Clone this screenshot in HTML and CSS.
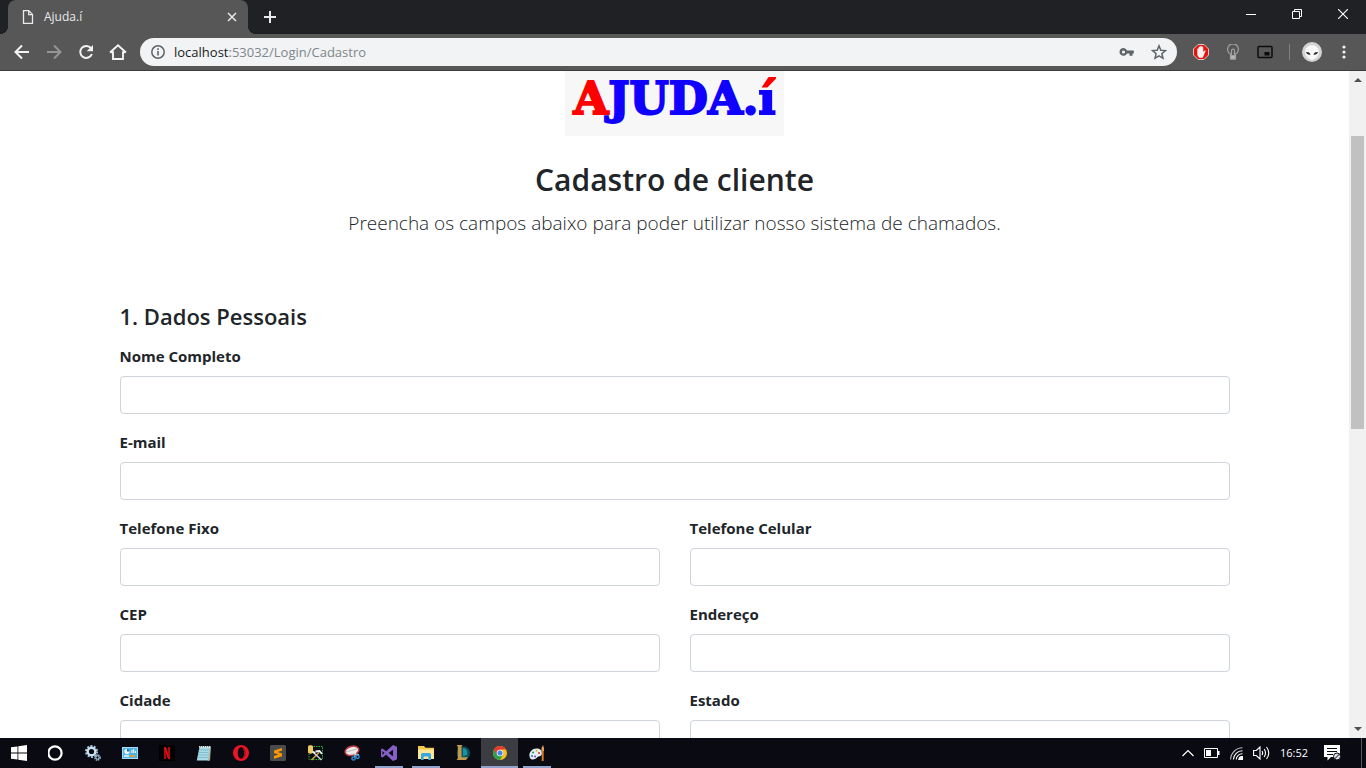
FILE: index.html
```html
<!DOCTYPE html>
<html lang="pt-BR">
<head>
<meta charset="utf-8">
<meta name="viewport" content="width=device-width, initial-scale=1">
<title>Ajuda.í</title>
<link rel="stylesheet" href="styles.css">
</head>
<body>
<header class="browser">
  <div class="tabstrip">
    <div class="tab">
      <svg class="tab-icon" width="12" height="16" viewBox="0 0 12 16" fill="none" stroke="#e8eaed" stroke-width="1.3"><path d="M1.5 1.6h5.3l3.7 3.8v9h-9zM6.7 1.6v4h3.8"/></svg>
      <span class="tab-title">Ajuda.í</span>
      <button class="plain" aria-label="Fechar guia"><svg width="10" height="10" viewBox="0 0 10 10" stroke="#e8eaed" stroke-width="1.5"><path d="M1 1l8 8M9 1l-8 8"/></svg></button>
    </div>
    <button class="plain new-tab" aria-label="Nova guia"><svg width="12" height="12" viewBox="0 0 12 12" stroke="#e8eaed" stroke-width="2"><path d="M6 0v12M0 6h12"/></svg></button>
    <div class="window-buttons">
      <button class="plain" aria-label="Minimizar"><svg width="10" height="10" viewBox="0 0 10 10" stroke="#fff"><path d="M0 5.5h10"/></svg></button>
      <button class="plain" aria-label="Restaurar"><svg width="10" height="10" viewBox="0 0 10 10" stroke="#fff" fill="none"><path d="M.5 2.5h7v7h-7zM2.5 2.5v-2h7v7h-2"/></svg></button>
      <button class="plain" aria-label="Fechar"><svg width="10" height="10" viewBox="0 0 10 10" stroke="#fff" stroke-width="1.1"><path d="M0 0l10 10M10 0L0 10"/></svg></button>
    </div>
  </div>
  <div class="toolbar">
    <div class="nav">
      <button class="plain" aria-label="Voltar"><svg width="16" height="16" viewBox="0 0 16 16" fill="none" stroke="#f1f3f4" stroke-width="2"><path d="M15 8H2M8 1.5L1.5 8 8 14.5"/></svg></button>
      <button class="plain" aria-label="Avançar"><svg width="16" height="16" viewBox="0 0 16 16" fill="none" stroke="#959595" stroke-width="2"><path d="M1 8h13M8 1.5L14.5 8 8 14.5"/></svg></button>
      <button class="plain" aria-label="Recarregar"><svg width="16" height="16" viewBox="0 0 16 16"><path d="M13 4.2A6 6 0 1 0 13.9 10" fill="none" stroke="#f1f3f4" stroke-width="2"/><path d="M15 1v6.3H8.7z" fill="#f1f3f4"/></svg></button>
      <button class="plain" aria-label="Página inicial"><svg width="18" height="16" viewBox="0 0 18 16" fill="none" stroke="#f1f3f4" stroke-width="1.9"><path d="M1 8.5L9 1.3l8 7.2M1.5 8.2H4V15h10V8.200h2.500"/></svg></button>
    </div>
    <div class="address">
      <svg width="14" height="14" viewBox="0 0 14 14" fill="none" stroke="#5f6368" stroke-width="1.5"><circle cx="7" cy="7" r="6.2"/><path d="M7 6v4.500M7 3.300v1.600" stroke-width="1.600"/></svg>
      <span class="url"><b>localhost</b>:53032/Login/Cadastro</span>
      <button class="plain" aria-label="Senhas"><svg width="16" height="10" viewBox="0 0 16 10"><path d="M8 3.400h6.800v3h-1.300v2.400h-3V6.400H8A3.900 3.900 0 1 1 8 3.400zM4.500 3.400a1.600 1.600 0 1 0 0 3.200 1.600 1.600 0 0 0 0-3.200z" fill="#5f6368" fill-rule="evenodd"/></svg></button>
      <button class="plain" aria-label="Favoritos"><svg width="16" height="16" viewBox="0 0 16 16" fill="none" stroke="#5f6368" stroke-width="1.500"><path d="M8 1.800l1.800 4.400 4.700.4-3.600 3.100 1.100 4.600L8 11.900l-4 2.400 1.100-4.600-3.600-3.100 4.700-.4z"/></svg></button>
    </div>
    <div class="extensions">
      <button class="plain" aria-label="Bloqueador"><svg width="16" height="16" viewBox="0 0 16 16"><path d="M5 .5h6L15.500 5v6L11 15.500H5L.5 11V5z" fill="#e9120b" stroke="#d7c6c6"/><path d="M4.300 8V5c0-1 1.400-1 1.400 0V3.300c0-1 1.500-1 1.500 0v-.7c0-1 1.500-1 1.500 0v.7c0-1 1.500-1 1.500 0V8l1-1.300c.9-.7 1.700 0 1.200.8L10.700 11.500 9.800 13.800H6L4.300 11z" fill="#f5f1f1"/></svg></button>
      <button class="plain" aria-label="Lâmpada"><svg width="14" height="16" viewBox="0 0 14 16" fill="none" stroke="#a0a0a0" stroke-width="1.200"><path d="M4.500 11.500V10A5.400 5.400 0 1 1 9.500 10v1.500M5.500 11V6.200c0-1.500 3-1.500 3 0V11"/><path d="M4.500 11.500h5v3.600h-5z" fill="#b8b8b8"/></svg></button>
      <button class="plain" aria-label="Picture in picture"><svg width="16" height="14" viewBox="0 0 16 14"><rect x="1" y="1.500" width="14" height="11" rx="1" fill="none" stroke="#0c0c0c" stroke-width="1.500"/><path d="M7.500 7h5v3.500h-5z" fill="#0c0c0c"/></svg></button>
    </div>
    <span class="divider"></span>
    <button class="plain avatar" aria-label="Perfil"><svg width="20" height="20" viewBox="0 0 20 20"><circle cx="10" cy="10" r="10" fill="#d3d3d3"/><path d="M3 10C3 1 17 1 17 10c0 4-4 7.500-7 8-3-.5-7-4-7-8z" fill="#f8f8f8"/><path d="M4 10c2.500 0 4 .8 4.600 2.600-2.600.2-4.100-.6-4.600-2.600zM16 10c-2.500 0-4 .8-4.600 2.600 2.600.2 4.100-.6 4.600-2.600z" fill="#222"/></svg></button>
    <button class="plain menu" aria-label="Menu"><svg width="4" height="14" viewBox="0 0 4 14" fill="#f1f3f4"><circle cx="2" cy="2" r="1.600"/><circle cx="2" cy="7" r="1.600"/><circle cx="2" cy="12" r="1.600"/></svg></button>
  </div>
</header>

<div class="viewport">
  <main class="page">
    <div class="container">
      <div class="intro">
        <div class="logo"><span class="logo-a">A</span>JUDA.<span class="logo-i">í</span></div>
        <h2>Cadastro de cliente</h2>
        <p class="lead">Preencha os campos abaixo para poder utilizar nosso sistema de chamados.</p>
      </div>
      <form>
        <h4>1. Dados Pessoais</h4>
        <div class="fields">
          <div class="field wide"><label for="nome">Nome Completo</label><input id="nome" type="text"></div>
          <div class="field wide"><label for="email">E-mail</label><input id="email" type="email"></div>
          <div class="field"><label for="fixo">Telefone Fixo</label><input id="fixo" type="tel"></div>
          <div class="field"><label for="celular">Telefone Celular</label><input id="celular" type="tel"></div>
          <div class="field"><label for="cep">CEP</label><input id="cep" type="text"></div>
          <div class="field"><label for="endereco">Endereço</label><input id="endereco" type="text"></div>
          <div class="field"><label for="cidade">Cidade</label><input id="cidade" type="text"></div>
          <div class="field"><label for="estado">Estado</label><input id="estado" type="text"></div>
        </div>
      </form>
    </div>
  </main>
  <div class="scrollbar">
    <svg width="8" height="4" viewBox="0 0 8 4"><path d="M0 4l4-4 4 4z" fill="#505050"/></svg>
    <div class="track"><div class="thumb"></div></div>
    <svg width="8" height="4" viewBox="0 0 8 4"><path d="M0 0l4 4 4-4z" fill="#505050"/></svg>
  </div>
</div>

<footer class="taskbar">
  <div class="apps">
    <button class="app" aria-label="Iniciar"><svg width="16" height="16" viewBox="0 0 16 16" fill="#fff"><path d="M0 2.300l6.500-.9v6.200H0zM7.300 1.300L16 0v7.600H7.300zM0 8.400h6.500v6.200L0 13.700zM7.300 8.400H16V16l-8.700-1.300z"/></svg></button>
    <button class="app" aria-label="Cortana"><svg width="16" height="16" viewBox="0 0 16 16"><circle cx="7" cy="8" r="6.600" fill="none" stroke="#fff" stroke-width="2.200"/></svg></button>
    <button class="app" aria-label="Serviços"><svg width="16" height="16" viewBox="0 0 16 16" fill="none"><circle cx="6.500" cy="6.500" r="5.500" stroke="#9fc0d4" stroke-width="2" stroke-dasharray="2 1.450"/><circle cx="6.500" cy="6.500" r="3.800" stroke="#c9e0ed" stroke-width="2.400"/><circle cx="12.500" cy="12.500" r="2.600" stroke="#87a9c2" stroke-width="1.600" stroke-dasharray="1.500 .6"/><circle cx="12.500" cy="12.500" r="1.600" stroke="#b9d3e4"/></svg></button>
    <button class="app" aria-label="Painel de Controle"><svg width="16" height="14" viewBox="0 0 16 14"><rect x=".5" y="1.500" width="15" height="11" fill="#4cb3e8" stroke="#a7dcf5"/><circle cx="5" cy="5.500" r="2.700" fill="#e9f5fb"/><path d="M5 5.500V2.800A2.700 2.700 0 0 1 7.700 5.500z" fill="#1d6fae"/><path d="M9.500 4h1v3h-1zM11.200 3h1v4h-1zM13 5h1v2h-1z" fill="#fff"/><path d="M2 10h5" stroke="#fff" stroke-width="1.400"/><path d="M8 10h5" stroke="#f0a020" stroke-width="1.800"/></svg></button>
    <button class="app" aria-label="Netflix"><svg width="16" height="16" viewBox="0 0 16 16"><path d="M0 0h16v16H0z" fill="#000"/><path d="M5 2h2v12l-2 .3zM9 2h2v12.300L9 14z" fill="#b20710"/><path d="M5 2h2l4 12.300L9 14z" fill="#e50914"/></svg></button>
    <button class="app" aria-label="Bloco de Notas"><svg width="16" height="16" viewBox="0 0 16 16"><path d="M4 1.500h11L14 15.500 12 16z" fill="#b5ae98"/><path d="M3.500 2H14l-2 13.500H.8z" fill="#a8dbe6"/><path d="M3 5h10M2.500 7.500h10M2 10h10.500M1.500 12.500h10.500" stroke="#6fb2c4" stroke-width=".7"/><path d="M3 1.700h12" stroke="#e5ebeb" stroke-width="1.600" stroke-dasharray="1.200 .8"/></svg></button>
    <button class="app" aria-label="Opera"><svg width="16" height="16" viewBox="0 0 16 16"><path fill-rule="evenodd" d="M8 0a8 8 0 1 0 0 16A8 8 0 0 0 8 0zm0 2.300c2 0 3.200 2.600 3.200 5.700S10 13.700 8 13.700 4.800 11.100 4.800 8 6 2.300 8 2.300z" fill="#e91525"/><path d="M8 2.300C14 0 15 15.500 8 13.700c2 0 3.200-2.600 3.200-5.700S10 2.300 8 2.300z" fill="#b30d1a"/></svg></button>
    <button class="app" aria-label="Sublime Text"><svg width="16" height="16" viewBox="0 0 16 16"><rect width="16" height="16" rx="1.500" fill="#4b4b4b"/><path d="M12 3v2.600L7.500 7 12 8.600v2.600L4 13.700v-2.600l4.500-1.500L4 8V5.500z" fill="#ff9800"/></svg></button>
    <button class="app" aria-label="Configuração"><svg width="16" height="16" viewBox="0 0 16 16"><path d="M4 1.500h11.500v13H2V9" fill="none" stroke="#22b52a" stroke-dasharray="1.500 1"/><path d="M1 1.500C1-.2 6 0 6 1.500v6C6 9 1 9 1 7.500z" fill="#efca63"/><path d="M4.500 15L12 7.500" stroke="#c99b39" stroke-width="1.700"/><path d="M7 8l7.500 7" stroke="#c8d2dc" stroke-width="1.600"/><path d="M8.500 6.500l4-.5 2.500 3M6 6.500l2 2" stroke="#edf2f4" stroke-width="1.800" fill="none"/></svg></button>
    <button class="app" aria-label="Ferramenta de Captura"><svg width="16" height="16" viewBox="0 0 16 16"><ellipse cx="8" cy="5.800" rx="7" ry="4.500" transform="rotate(-15 8 6)" fill="#f0e9ea" stroke="#bd3943" stroke-width="1.500"/><path d="M2 7l11-3" stroke="#bbb"/><path d="M7 8.500l8 1M11.500 8l-.7 4" stroke="#d3dce3" stroke-width="1.200"/><g fill="none" stroke="#2a8cd0" stroke-width="1.500"><circle cx="9.500" cy="13.500" r="1.600"/><circle cx="13.500" cy="11.800" r="1.600"/></g></svg></button>
    <button class="app open" aria-label="Visual Studio"><svg width="16" height="16" viewBox="0 0 16 16"><path fill-rule="evenodd" d="M12 0l4 1.700v12.600L12 16 5.200 9.700 1.500 12.500 0 11.700V4.300l1.500-.8 3.700 2.800zM12 4.700L7.500 8l4.500 3.300zM1.500 6v4l2-2z" fill="#865fc5"/></svg></button>
    <button class="app open" aria-label="Explorador de Arquivos"><svg width="16" height="14" viewBox="0 0 16 14"><path d="M0 0h6l1.500 1.700H16V13H0z" fill="#f2c94c"/><path d="M0 3.500h16V13H0z" fill="#ffe694"/><path d="M3 14V8.500Q3 7 4.500 7h7Q13 7 13 8.500V14h-2.700v-3.500H5.700V14z" fill="#38a7e4"/></svg></button>
    <button class="app" aria-label="League of Legends"><svg width="16" height="16" viewBox="0 0 16 16"><circle cx="8.500" cy="8" r="6" fill="#0d5762" stroke="#104451" stroke-width="1.500"/><path d="M8 3c3 0 5 3 4 7L8 11z" fill="#1b929b"/><path d="M1.500 0h6L6.500 1.500v10.700H13L11 15H1.500l1.300-1.800V1.600z" fill="#c19a4e"/></svg></button>
    <button class="app active open" aria-label="Google Chrome"><svg width="16" height="16" viewBox="0 0 16 16"><circle cx="8" cy="8" r="7" fill="#fbc116"/><path d="M1.940 4.500A7 7 0 0 0 8 15l3-5.200L8 8z" fill="#2ba24c"/><path d="M1.940 4.500L5 9.700 8 4.500h6.060A7 7 0 0 0 1.940 4.500z" fill="#e33b2e"/><circle cx="8" cy="8" r="3.300" fill="#f4f4f4"/><circle cx="8" cy="8" r="2.500" fill="#4285f4"/></svg></button>
    <button class="app open" aria-label="Paint"><svg width="16" height="16" viewBox="0 0 16 16"><path d="M1 13C-1 9 2 3.500 7.500 3.500 12 3.500 14 7 12.500 10c-.7 1.700-3 .7-4 2C7 14 3 16 1 13z" fill="#e3edf5"/><circle cx="4" cy="7.500" r="1.100" fill="#36a143"/><circle cx="7.500" cy="5.700" r="1" fill="#e6b31a"/><circle cx="3" cy="11" r="1.100" fill="#3678c8"/><circle cx="10" cy="8" r="1.100" fill="#d33c32"/><circle cx="6" cy="11.500" r="1.100" fill="#8a4cad"/><path d="M13.700 16V6" stroke="#d77620" stroke-width="2"/><path d="M12.500 6V3L14 0l1 3v3z" fill="#e0a05a"/></svg></button>
  </div>
  <div class="tray">
    <button class="plain" aria-label="Ícones ocultos"><svg width="12" height="8" viewBox="0 0 12 8" fill="none" stroke="#fff" stroke-width="1.200"><path d="M.5 7L6 1.500 11.500 7"/></svg></button>
    <svg width="16" height="10" viewBox="0 0 16 10"><path d="M.5.500h13v9H.5z" fill="none" stroke="#fff"/><path d="M2 2h5v6H2zM14 3h1.500v4H14z" fill="#fff"/></svg>
    <svg width="13" height="13" viewBox="0 0 13 13" fill="none" stroke="#fff" stroke-width="1.100"><path d="M.6 12.500A12 12 0 0 1 12.500.8" stroke="#bbb"/><path d="M3.400 12.500a9 9 0 0 1 9.100-8.700M6.200 12.500a6 6 0 0 1 6.300-5.700"/><path d="M8.800 12.500a3.500 3.500 0 0 1 3.700-3v3z" fill="#fff"/></svg>
    <svg width="17" height="14" viewBox="0 0 17 14" fill="none" stroke="#fff" stroke-width="1.100"><path d="M.6 4.500h2.700L7 1v12L3.300 9.500H.6zM9 5q1.300 2 0 4M11.200 3q2.600 4 0 8M13.500 1q4.500 6 0 12"/></svg>
    <time class="clock">16:52</time>
    <button class="plain notes" aria-label="Notificações"><svg width="17" height="16" viewBox="0 0 17 16"><path d="M0 0h16v12H7l-3.500 3.500V12H0z" fill="#fff"/><path d="M3 3.500h10M3 6.500h10M3 9.500h6" stroke="#0a0b12"/><circle cx="13" cy="11.500" r="3.500" fill="#ddd" stroke="#0a0b12"/><path d="M10.500 14L15.500 9" stroke="#0a0b12"/></svg></button>
  </div>
</footer>
</body>
</html>
```
FILE: styles.css
```css
* { box-sizing: border-box; }

body {
  margin: 0;
  height: 100vh;
  display: flex;
  flex-direction: column;
  overflow: hidden;
  background: #fff;
  color: #212529;
  font: 16px/24px "Open Sans", "Noto Sans", sans-serif;
}

svg { display: block; flex: none; }

.plain {
  display: flex;
  align-items: center;
  justify-content: center;
  padding: 0;
  border: 0;
  background: none;
}

/* Browser window */
.browser { background: #575757; border-bottom: 1px solid #3c3c3c; }

.tabstrip { display: flex; height: 34px; background: #202124; padding-left: 8px; }

.tab {
  display: flex;
  align-items: center;
  width: 240px;
  padding: 0 11px 0 14px;
  background: #575757;
  border-radius: 8px 8px 0 0;
  position: relative;
}

.tab::before,
.tab::after {
  content: "";
  position: absolute;
  bottom: 0;
  width: 8px;
  height: 8px;
}
.tab::before { left: -8px; background: radial-gradient(circle at 0 0, #202124 8px, #575757 8px); }
.tab::after { right: -8px; background: radial-gradient(circle at 100% 0, #202124 8px, #575757 8px); }

.tab-title { flex: 1; margin-left: 10px; color: #e8eaed; font-size: 12px; }
.new-tab { width: 44px; }
.window-buttons { display: flex; margin-left: auto; padding-bottom: 6px; }
.window-buttons .plain { width: 46px; }

.toolbar { display: flex; align-items: center; height: 36px; }
.nav { display: flex; padding-left: 6px; }
.nav .plain { width: 32px; height: 28px; }

.address {
  flex: 1;
  display: flex;
  align-items: center;
  height: 28px;
  margin-left: 6px;
  padding: 0 10px 0 11px;
  border-radius: 14px;
  background: #f1f3f4;
}
.url { flex: 1; margin-left: 9px; color: #80868b; font-size: 13px; line-height: 20px; }
.url b { color: #202124; font-weight: 400; }
.address .plain { margin-left: 16px; }

.extensions { display: flex; margin-left: 8px; }
.extensions .plain { width: 32px; height: 28px; }
.divider { width: 1px; height: 16px; margin-left: 8px; background: #808080; }
.avatar { margin-left: 12px; }
.menu { margin: 0 20px; }

/* Page area */
.viewport { flex: 1; min-height: 0; display: flex; }
.page { flex: 1; overflow: hidden; }
.container { max-width: 1140px; margin: 0 auto; padding: 0 15px; }

.intro { display: flex; flex-direction: column; align-items: center; text-align: center; }

.logo {
  padding: 0 8px 10px;
  background: #f7f7f7;
  color: #1000ff;
  font: bold 45px/55px "DejaVu Serif", serif;
  -webkit-text-stroke: 2px currentColor;
}
.logo-a { color: #f00; }
.logo-i {
  background: linear-gradient(#f00 17px, #1000ff 17px);
  -webkit-background-clip: text;
  background-clip: text;
  color: transparent;
}

h2 { margin: 24px 0 8px; font-size: 30px; line-height: 40px; font-weight: 600; }
.lead { margin: 0; font-size: 19px; line-height: 30px; font-weight: 300; }

form { padding-top: 64px; }
h4 { margin: 0 0 14px; font-size: 22px; line-height: 28px; font-weight: 600; }

.fields { display: grid; grid-template-columns: 1fr 1fr; gap: 16px 30px; }
.wide { grid-column: 1 / -1; }
.field label { display: block; margin-bottom: 8px; font-size: 15px; font-weight: 700; }
.field input {
  display: block;
  width: 100%;
  height: 38px;
  padding: 6px 12px;
  border: 1px solid #ced4da;
  border-radius: 4px;
  background: #fff;
  color: inherit;
  font: inherit;
}

.scrollbar {
  width: 17px;
  display: flex;
  flex-direction: column;
  align-items: center;
  padding: 7px 2px;
  background: #f1f1f1;
}
.track { flex: 1; width: 100%; padding: 54px 0 6px; }
.thumb { height: 50%; background: #c1c1c1; }

/* Taskbar */
.taskbar { display: flex; justify-content: space-between; height: 30px; background: #0a0b12; }
.apps { display: flex; }
.app {
  display: flex;
  align-items: center;
  justify-content: center;
  width: 37px;
  padding: 0;
  border: 0;
  background: none;
}
.app.open { background: linear-gradient(#8fa3cc, #8fa3cc) center bottom / 28px 2px no-repeat; }
.app.active { background: linear-gradient(#8fa3cc, #8fa3cc) center bottom / 100% 2px no-repeat #3b3d42; }

.tray {
  display: flex;
  align-items: center;
  gap: 10px;
  margin-right: 4px;
  padding-right: 20px;
  border-right: 1px solid #55565b;
}
.clock { color: #fff; font-size: 11px; line-height: 16px; }
.notes { margin-left: 6px; }
```
